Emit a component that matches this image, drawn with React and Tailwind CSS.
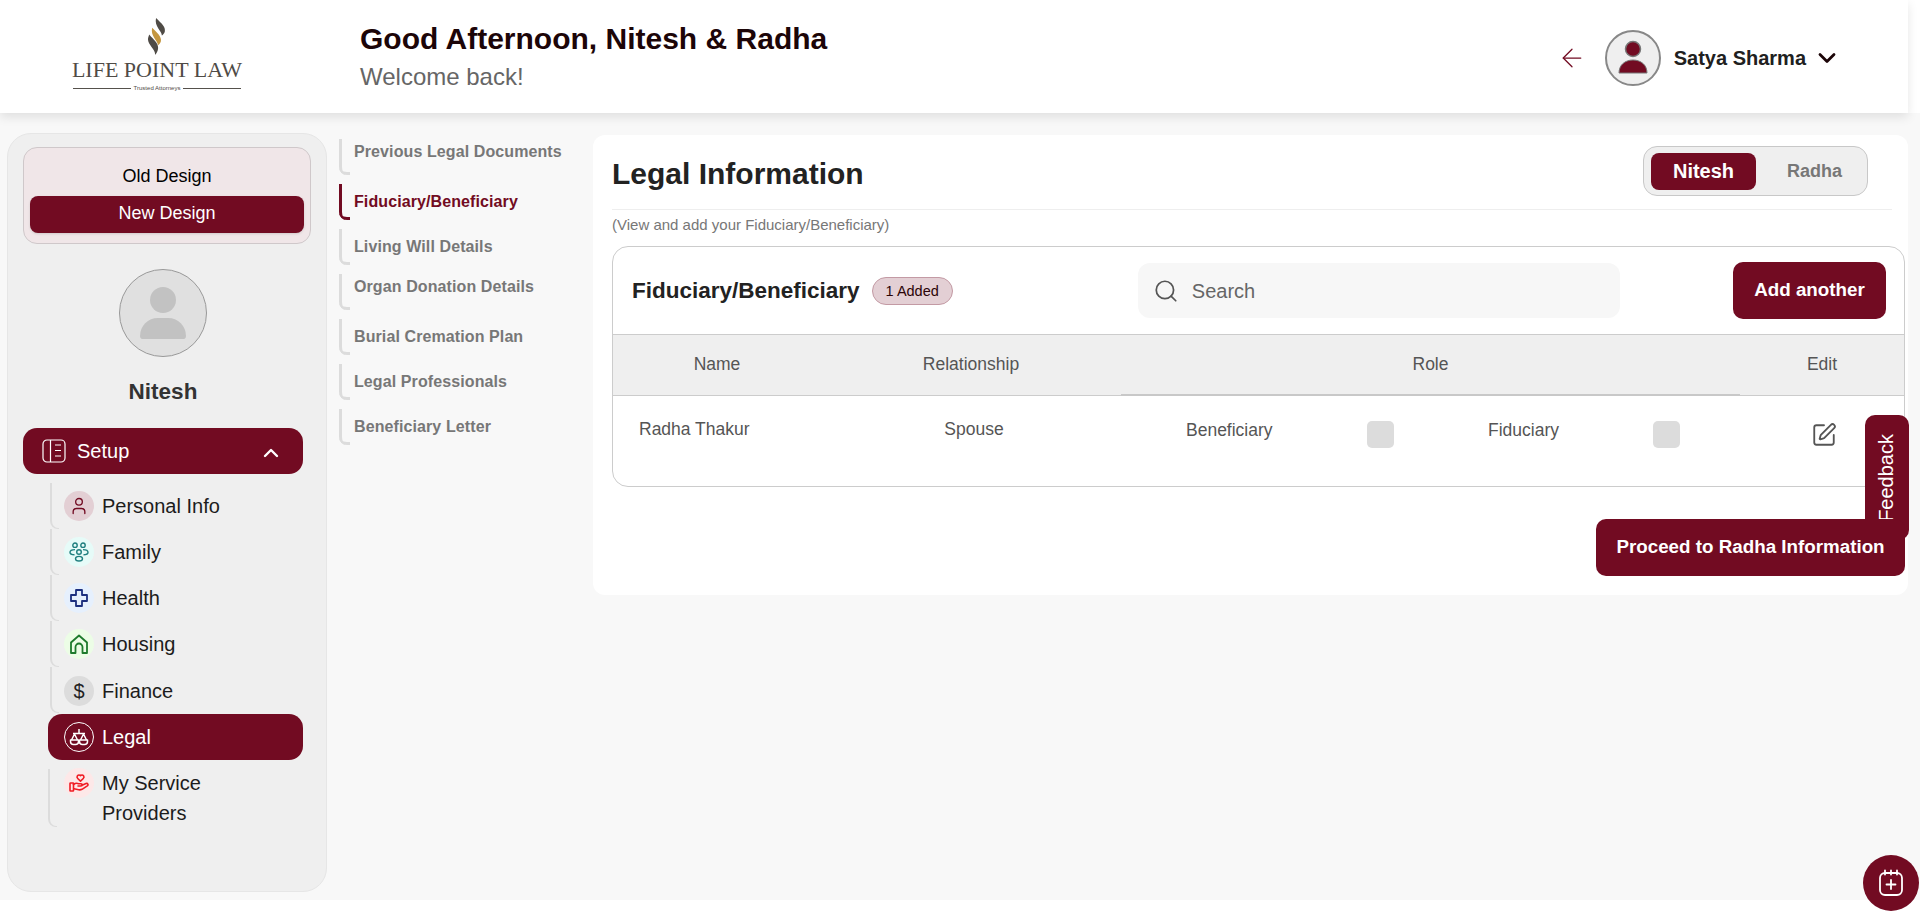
import { useState } from "react";
import { ArrowLeft, ChevronDown, ChevronUp, Search, SquarePen, User } from "lucide-react";

const MAROON = "bg-[#720b22]";

const SETUP = [
  { label: "Personal Info", bubble: "bg-[#e3cfd4]", top: "top-[8px]", icon: <User size={20} strokeWidth={1.6} className="text-[#720b22]" /> },
  { label: "Family", bubble: "bg-[#e6fbf8]", top: "top-[8px]", icon: <FamilyIcon /> },
  { label: "Health", bubble: "bg-[#e6f0fd]", top: "top-[8px]", icon: <CrossIcon /> },
  { label: "Housing", bubble: "bg-[#ecfde6]", top: "top-[8px]", icon: <HouseIcon /> },
  { label: "Finance", bubble: "bg-[#dcdcdc]", top: "top-[9px]", icon: <span className="text-[20px] text-[#222]">$</span> },
  { label: "Legal", active: true, bubble: "border border-white", icon: <ScalesIcon /> },
];

const SECTIONS = [
  { label: "Previous Legal Documents", pt: "pt-[2px]" },
  { label: "Fiduciary/Beneficiary", pt: "pt-[7px]", active: true },
  { label: "Living Will Details", pt: "pt-[7px]" },
  { label: "Organ Donation Details", pt: "pt-[2px]" },
  { label: "Burial Cremation Plan", pt: "pt-[7px]" },
  { label: "Legal Professionals", pt: "pt-[7px]" },
  { label: "Beneficiary Letter", pt: "pt-[7px]" },
];

function FamilyIcon() {
  return (
    <svg width="20" height="20" viewBox="0 0 20 20" fill="none" stroke="#1f7f7f" strokeWidth="1.4">
      <circle cx="6" cy="3.200" r="2.200" />
      <circle cx="14" cy="3.200" r="2.200" />
      <circle cx="10" cy="10" r="2.300" />
      <ellipse cx="10" cy="16.700" rx="3.500" ry="2.300" />
      <path d="M6 7.600C2.500 7.600 1 9 1 10.300s1.500 2.500 4.500 2.500" />
      <path d="M14 7.600c3.500 0 5 1.400 5 2.700s-1.500 2.500-4.500 2.500" />
    </svg>
  );
}

function CrossIcon() {
  return (
    <svg width="20" height="20" viewBox="0 0 20 20" fill="none" stroke="#1c2f7f" strokeWidth="1.8" strokeLinejoin="round">
      <path d="M7 2h6v5h5v6h-5v5H7v-5H2V7h5z" />
    </svg>
  );
}

function HouseIcon() {
  return (
    <svg width="22" height="22" viewBox="0 0 22 22" fill="none" stroke="#1d7a2c" strokeWidth="1.8" strokeLinejoin="round">
      <path d="M3 20V9.500L11 2.500l8 7V20h-4.500v-6a3.500 3.500 0 0 0-7 0v6z" />
    </svg>
  );
}

function ScalesIcon() {
  return (
    <svg width="20" height="18" viewBox="0 0 20 18" fill="none" stroke="white" strokeWidth="1.500" strokeLinejoin="round">
      <path d="M10 1v5M4 5.500h12" />
      <path d="M5.500 6 2.500 12M5.500 6l3 6M14.500 6l-3 6M14.500 6l3 6" />
      <path d="M1.500 12h8v1.500a3 3 0 0 1-3 3h-2a3 3 0 0 1-3-3zM10.500 12h8v1.500a3 3 0 0 1-3 3h-2a3 3 0 0 1-3-3z" />
    </svg>
  );
}

function CareIcon() {
  return (
    <svg width="20" height="20" viewBox="0 0 20 20" fill="none" stroke="#f01c24" strokeWidth="1.600" strokeLinejoin="round" strokeLinecap="round">
      <path d="M11.500 8.200 8.700 5.500C7 3.800 9 1.200 11 2.300l.5.400.5-.4c2-1.100 4 1.500 2.300 3.200z" />
      <rect x="1" y="10" width="3.500" height="8" rx=".5" />
      <path d="M4.500 11.500c2-1.500 3.500-1.500 5-.8h2.500c1.700 0 1.700 2.300 0 2.300H9M12.500 12.500l4.500-2c1.700-.7 2.700 1.300 1.300 2.300l-5.300 3.500c-1.500.8-3 .7-4.500.2l-3.500-.8" />
    </svg>
  );
}

function SetupIcon() {
  return (
    <svg width="24" height="24" viewBox="0 0 24 24" fill="none" stroke="white" strokeWidth="1.2">
      <rect x="1" y="1" width="22" height="22" rx="4" />
      <path d="M8.500 1v22M13 6h6M13 11.500h6M13 17h6" />
    </svg>
  );
}

function Logo() {
  return (
    <div className="flex flex-col items-center w-[168px] text-[#4f4b46]">
      <svg width="20" height="37" viewBox="0 0 20 38">
        <path d="M9 0c6 6 10 9 9 14-.5 2-2 3-3 4 0-5-8-9-6-18z" fill="#4f4b46" />
        <path d="M5 10c5 5 10 9 9 14-.5 2-1.500 3-3 4 0-5-8-9-6-18z" fill="#c4963f" />
        <path d="M2 17c5 6 10 9 9 15-.3 2-1.500 4-3 6 1-6-9-11-7-18z" fill="#4f4b46" />
      </svg>
      <span className="font-['Liberation_Serif',serif] text-[22px] leading-[26px] mt-[2px] whitespace-nowrap">LIFE POINT LAW</span>
      <div className="flex items-center w-full gap-[3px] mt-[1px]">
        <div className="flex-1 h-px bg-[#55514c]" />
        <span className="text-[6px] leading-[8px] whitespace-nowrap">Trusted Attorneys</span>
        <div className="flex-1 h-px bg-[#55514c]" />
      </div>
    </div>
  );
}

export default function App() {
  const [person, setPerson] = useState("Nitesh");

  return (
    <div className="relative h-[912px] overflow-hidden bg-white font-['Liberation_Sans',Arial,sans-serif]">
      {/* Top bar */}
      <header className="relative z-10 w-[1908px] h-[113px] bg-white shadow-[0_4px_10px_rgba(0,0,0,0.1)] flex items-center">
        <div className="w-[360px] pl-[73px] pb-[3px] shrink-0">
          <Logo />
        </div>
        <div className="flex-1">
          <h1 className="text-[30px] leading-[36px] font-bold text-[#1c0508]">Good Afternoon, Nitesh &amp; Radha</h1>
          <p className="text-[24px] leading-[32px] text-[#666] mt-[4px]">Welcome back!</p>
        </div>
        <div className="flex items-center pr-[67px] pt-[2px]">
          <ArrowLeft size={30} strokeWidth={1} className="text-[#720b22] mr-[18px]" />
          <div className="w-[56px] h-[56px] rounded-full border-2 border-[#888] bg-[#efefef] flex items-center justify-center">
            <svg width="32" height="36" viewBox="0 0 32 36">
              <circle cx="16" cy="9" r="7.500" fill="#720b22" stroke="#777" strokeWidth="1.500" />
              <path d="M2 33c0-8 6-13 14-13s14 5 14 13z" fill="#720b22" stroke="#777" strokeWidth="1" />
            </svg>
          </div>
          <span className="ml-[13px] text-[20px] font-bold text-[#202020]">Satya Sharma</span>
          <ChevronDown size={28} strokeWidth={2.4} className="ml-[7px] text-[#1c0508]" />
        </div>
      </header>

      <div className="flex h-[787px] bg-[#f8f8f8]">
        {/* Sidebar */}
        <aside className="ml-[7px] mt-[20px] w-[320px] h-[759px] shrink-0 rounded-[24px] border border-[#e6e6e6] bg-[#efefef] px-[15px] pt-[13px]">
          <div className="w-[288px] h-[97px] rounded-[14px] border border-[#cfc8ca] bg-[#f0e6e8] px-[6px] pt-[14px] text-center">
            <p className="text-[18px] leading-[28px] text-black">Old Design</p>
            <div className={`${MAROON} mt-[6px] h-[37px] rounded-[8px] text-white text-[18px] leading-[34px] shadow-sm`}>New Design</div>
          </div>

          <div className="w-[88px] h-[88px] mt-[25px] ml-[96px] rounded-full border border-[#999] bg-[#e0e0e0] flex flex-col items-center justify-center">
            <div className="w-[26px] h-[26px] rounded-full bg-[#c2c2c2]" />
            <div className="w-[46px] h-[21px] mt-[5px] rounded-t-[23px] rounded-b-[4px] bg-[#c2c2c2]" />
          </div>
          <p className="mt-[20px] w-[280px] text-center text-[22.500px] leading-[30px] font-bold text-[#333]">Nitesh</p>

          <div className={`${MAROON} mt-[21px] w-[280px] h-[46px] rounded-[14px] flex items-center pl-[19px] pr-[20px] text-white`}>
            <SetupIcon />
            <span className="ml-[11px] text-[20px]">Setup</span>
            <ChevronUp size={24} strokeWidth={2.4} className="ml-auto mt-[3px]" />
          </div>

          <ul className="mt-[9px] w-[280px]">
            {SETUP.map(item => (
              <li key={item.label} className={item.active ? "" : "pl-[27px]"}>
                {item.active ? (
                  <div className={`${MAROON} ml-[25px] mt-[1px] h-[46px] rounded-[14px] flex items-center pl-[16px] text-white`}>
                    <span className={`w-[30px] h-[30px] rounded-full flex items-center justify-center ${item.bubble}`}>{item.icon}</span>
                    <span className="ml-[8px] text-[20px]">{item.label}</span>
                  </div>
                ) : (
                  <div className="h-[46px] w-[9px] border-l-2 border-b border-[#dcdcdc] rounded-bl-[8px] relative">
                    <div className={`absolute left-[12px] ${item.top} flex items-center w-[220px]`}>
                      <span className={`w-[30px] h-[30px] shrink-0 rounded-full flex items-center justify-center ${item.bubble}`}>{item.icon}</span>
                      <span className="ml-[8px] text-[20px] text-[#1c1c1c]">{item.label}</span>
                    </div>
                  </div>
                )}
              </li>
            ))}
            <li className="ml-[25px] mt-[9px] flex h-[58px] w-[9px] border-l-2 border-b border-[#dcdcdc] rounded-bl-[8px] relative">
              <div className="absolute left-[14px] -top-[1px] flex w-[220px]">
                <span className="w-[30px] h-[30px] shrink-0 rounded-full bg-[#fde8e8] flex items-center justify-center">
                  <CareIcon />
                </span>
                <span className="ml-[8px] text-[20px] leading-[30px] text-[#1c1c1c] whitespace-pre-line">{"My Service\nProviders"}</span>
              </div>
            </li>
          </ul>
        </aside>

        {/* Section links */}
        <nav className="ml-[12px] mt-[26px] w-[254px] shrink-0 flex flex-col gap-[9px]">
          {SECTIONS.map(s => (
            <div
              key={s.label}
              className={`h-[36px] border-l-[3px] rounded-bl-[8px] relative ${s.active ? "border-[#720b22]" : "border-[#dcdcdc]"}`}
            >
              <div className={`absolute -left-[3px] bottom-0 w-[11px] h-[8px] border-b-[3px] rounded-bl-[8px] ${s.active ? "border-[#720b22]" : "border-[#dcdcdc]"}`} />
              <p className={`pl-[12px] text-[16px] leading-[22px] font-bold tracking-[0.1px] whitespace-nowrap ${s.pt} ${s.active ? "text-[#720b22]" : "text-[#777]"}`}>{s.label}</p>
            </div>
          ))}
        </nav>

        {/* Main card */}
        <main className="mt-[22px] w-[1315px] h-[460px] shrink-0 rounded-[12px] bg-white pl-[19px] pr-[3px]">
          <div className="flex items-start h-[75px] border-b border-[#eeeeee] mr-[13px]">
            <h2 className="mt-[21px] text-[30px] leading-[36px] font-bold text-[#222]">Legal Information</h2>
            <div className="ml-auto mr-[24px] mt-[11px] w-[225px] h-[50px] rounded-[14px] border border-[#c8c8c8] bg-[#efefef] flex items-center pl-[7px]">
              {["Nitesh", "Radha"].map(p => (
                <button
                  key={p}
                  onClick={() => setPerson(p)}
                  className={`w-[105px] h-[37px] rounded-[8px] font-bold ${person === p ? `${MAROON} text-white text-[20px]` : "pl-[12px] text-[#777] text-[18px]"}`}
                >
                  {p}
                </button>
              ))}
            </div>
          </div>
          <p className="mt-[5px] text-[15px] leading-[20px] text-[#777]">(View and add your Fiduciary/Beneficiary)</p>

          {/* Table card */}
          <section className="mt-[11px] h-[241px] rounded-[16px] border border-[#cccccc] overflow-hidden">
            <div className="h-[87px] flex items-center pl-[19px] pr-[18px]">
              <h3 className="text-[22.500px] font-bold text-[#222]">Fiduciary/Beneficiary</h3>
              <span className="ml-[12px] h-[28px] px-[13px] rounded-full border border-[#c39aa4] bg-[#e3cfd4] text-[14.500px] leading-[26px] text-[#2c0508]">1 Added</span>
              <div className="ml-[185px] w-[482px] h-[55px] rounded-[12px] bg-[#f7f7f7] flex items-center pl-[15px]">
                <Search size={26} strokeWidth={1.6} className="text-[#555]" />
                <input placeholder="Search" className="ml-[13px] flex-1 bg-transparent text-[20px] text-[#555] placeholder:text-[#666] outline-none" />
              </div>
              <button className={`${MAROON} ml-auto w-[153px] h-[57px] rounded-[10px] text-white text-[18.800px] font-bold`}>Add another</button>
            </div>

            <div className="grid grid-cols-[208px_300px_619px_1fr] h-[62px] bg-[#efefef] border-y border-[#cccccc] text-[17.500px] text-[#555] text-center">
              <div className="leading-[58px]">Name</div>
              <div className="leading-[58px]">Relationship</div>
              <div className="leading-[58px] h-[61px] border-b-2 border-[#c8c8c8]">Role</div>
              <div className="leading-[58px]">Edit</div>
            </div>

            <div className="grid grid-cols-[208px_300px_619px_1fr] text-[17.500px] text-[#555]">
              <div className="pl-[26px] pt-[21px] leading-[24px]">Radha Thakur</div>
              <div className="pt-[21px] pl-[6px] text-center leading-[24px]">Spouse</div>
              <div className="relative pt-[22px] leading-[24px]">
                <span className="ml-[65px]">Beneficiary</span>
                <span className="absolute left-[246px] top-[25px] w-[27px] h-[27px] rounded-[5px] bg-[#dcdcdc]" />
                <span className="absolute left-[367px] top-[22px]">Fiduciary</span>
                <span className="absolute left-[532px] top-[25px] w-[27px] h-[27px] rounded-[5px] bg-[#dcdcdc]" />
              </div>
              <div className="pt-[26px] pl-[71px]">
                <SquarePen size={26} strokeWidth={1.7} className="text-[#555]" />
              </div>
            </div>
          </section>

          <div className="flex justify-end mt-[32px]">
            <button className={`${MAROON} relative z-20 w-[309px] h-[57px] rounded-[10px] text-white text-[18.800px] font-bold`}>Proceed to Radha Information</button>
          </div>
        </main>
      </div>

      {/* Floating widgets */}
      <div className={`${MAROON} absolute left-[1865px] top-[415px] w-[44px] h-[125px] rounded-[10px] flex items-start justify-center pt-[19px] pr-[2px] text-white text-[20px]`}>
        <span className="[writing-mode:vertical-rl] rotate-180 leading-[42px]">Feedback</span>
      </div>
      <div className={`${MAROON} absolute left-[1863px] top-[855px] w-[56px] h-[56px] rounded-full flex items-center justify-center`}>
        <svg width="26" height="28" viewBox="0 0 26 28" fill="none" stroke="white" strokeWidth="1.800" strokeLinecap="round">
          <rect x="2" y="4" width="22" height="22" rx="5" />
          <path d="M7 1.500v4M13 1.500v4M19 1.500v4M13 11v9M8.500 15.500h9" />
        </svg>
      </div>
    </div>
  );
}
